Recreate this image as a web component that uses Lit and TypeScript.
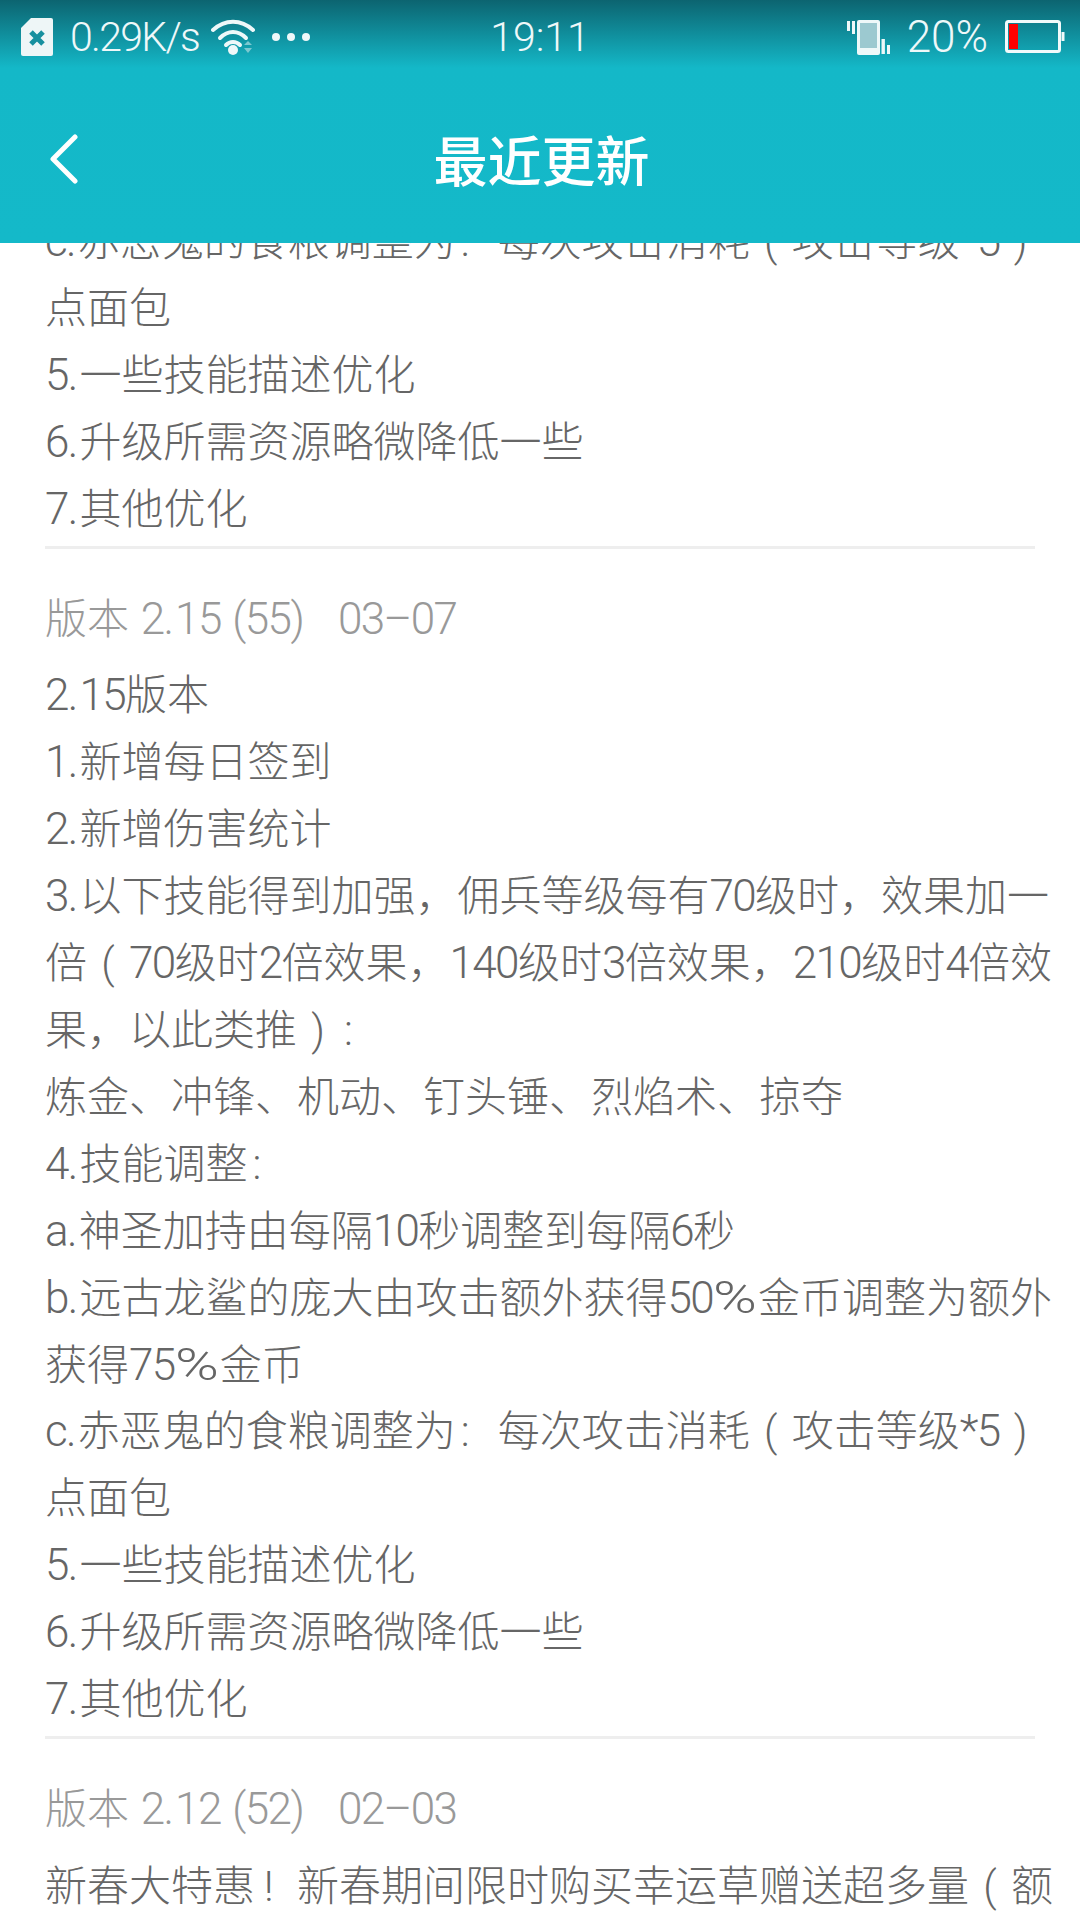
import { LitElement, html, css, svg } from 'lit';
import { customElement } from 'lit/decorators.js';

const releases = [
  {
    head: '',
    lines: [
      'c.赤恶鬼的食粮调整为：每次攻击消耗（攻击等级*5）',
      '点面包',
      '5.一些技能描述优化',
      '6.升级所需资源略微降低一些',
      '7.其他优化',
    ],
  },
  {
    head: '版本 2.15 (55)   03–07',
    lines: [
      '2.15版本',
      '1.新增每日签到',
      '2.新增伤害统计',
      '3.以下技能得到加强，佣兵等级每有70级时，效果加一',
      '倍（70级时2倍效果，140级时3倍效果，210级时4倍效',
      '果，以此类推）：',
      '炼金、冲锋、机动、钉头锤、烈焰术、掠夺',
      '4.技能调整：',
      'a.神圣加持由每隔10秒调整到每隔6秒',
      'b.远古龙鲨的庞大由攻击额外获得50%金币调整为额外',
      '获得75%金币',
      'c.赤恶鬼的食粮调整为：每次攻击消耗（攻击等级*5）',
      '点面包',
      '5.一些技能描述优化',
      '6.升级所需资源略微降低一些',
      '7.其他优化',
    ],
  },
  {
    head: '版本 2.12 (52)   02–03',
    lines: ['新春大特惠！新春期间限时购买幸运草赠送超多量（额'],
  },
];

// the phone's font draws full-width punctuation as small latin marks in a 1em box
const marks: Record<string, [string, string]> = {
  '（': ['(', 'fw'],
  '）': [')', 'fw'],
  '：': [':', 'fw colon'],
  '！': ['!', 'fw bang'],
  '%': ['%', 'pc'],
  '.': ['.', 'lat dot'],
};

function typeset(text: string) {
  const parts = text.match(/[（）：！%.]|[A-Za-z0-9*()– ]+|[^（）：！%.A-Za-z0-9*()– ]+/g) ?? [];
  return parts.map((p) => {
    if (marks[p]) return html`<span class=${marks[p][1]}>${marks[p][0]}</span>`;
    if (/^[A-Za-z0-9*()– ]/.test(p)) return html`<span class="lat">${p}</span>`;
    return p;
  });
}

const simIcon = svg`<svg class="sim" viewBox="0 0 32 38" width="32" height="38">
  <path d="M10 0H30a2 2 0 0 1 2 2V36a2 2 0 0 1-2 2H2a2 2 0 0 1-2-2V10z" fill="#eef6f7"/>
  <path d="M10 14l12 12M22 14L10 26" stroke="#17909f" stroke-width="5" fill="none"/>
</svg>`;

const wifiIcon = svg`<svg class="wifi" viewBox="0 0 44 36" width="44" height="36">
  <path d="M2 11C14 0 30 0 42 11" stroke="#eef8f9" stroke-width="4" fill="none" stroke-linecap="round"/>
  <path d="M9 19C17 11 27 11 35 19" stroke="#eef8f9" stroke-width="4" fill="none" stroke-linecap="round"/>
  <path d="M15 26C19 22 25 22 29 26" stroke="#eef8f9" stroke-width="4" fill="none" stroke-linecap="round"/>
  <circle cx="22" cy="31" r="5" fill="#eef8f9"/>
  <path d="M33 26L37 22L41 26zM33 29L41 29L37 34z" fill="#7cc8d0"/>
</svg>`;

const vibrateIcon = svg`<svg class="vibrate" viewBox="0 0 43 35" width="43" height="35">
  <rect x="0" y="1" width="3" height="10" fill="#eef8f9"/>
  <rect x="5" y="1" width="3" height="13" fill="#eef8f9"/>
  <rect x="10" y="0" width="23" height="35" rx="2" fill="#eef8f9"/>
  <rect x="13" y="3" width="17" height="25" fill="#9cc9d0"/>
  <rect x="34.5" y="19" width="3.4" height="15" fill="#eef8f9"/>
  <rect x="40" y="25" width="3" height="9" fill="#eef8f9"/>
</svg>`;

const batteryIcon = svg`<svg class="battery" viewBox="0 0 60 34" width="60" height="34">
  <rect x="1.5" y="1.5" width="53" height="30" rx="2" fill="none" stroke="#f2fafb" stroke-width="3"/>
  <rect x="4" y="4" width="9" height="25" fill="#ff0000"/>
  <rect x="56.5" y="12" width="3" height="9" fill="#f2fafb"/>
</svg>`;

@customElement('app-root')
export class AppRoot extends LitElement {
  static styles = css`
    :host {
      display: block;
      width: 1080px;
      height: 1920px;
      overflow: hidden;
      background: #fff;
      font-family: Roboto, 'Noto Sans CJK SC', sans-serif;
      font-weight: 300;
    }
    .top {
      height: 243px;
      background: linear-gradient(#0c6470 0, #14b8c8 68px, #14b9c9 100%);
      color: #eef8f9;
      position: relative;
      z-index: 1;
    }
    .status {
      height: 74px;
      box-sizing: border-box;
      padding: 0 15px 0 21px;
      display: flex;
      align-items: center;
      font-size: 41px;
    }
    .speed {
      margin-left: 17px;
      letter-spacing: -1.7px;
    }
    .wifi {
      margin-left: 12px;
    }
    .dots {
      display: flex;
      gap: 7px;
      margin-left: 17px;
    }
    .dots i {
      width: 8px;
      height: 8px;
      border-radius: 50%;
      background: #eef8f9;
    }
    .clock {
      position: absolute;
      left: 0;
      right: 0;
      text-align: center;
    }
    .right {
      margin-left: auto;
      display: flex;
      align-items: center;
    }
    .pct {
      margin: 0 17px;
      font-size: 44px;
    }
    .bar {
      height: 169px;
      display: flex;
      align-items: center;
      justify-content: center;
      position: relative;
    }
    .back {
      position: absolute;
      left: 49px;
      top: 60px;
    }
    .title {
      font-size: 54px;
      font-weight: 500;
      color: #fff;
      padding-left: 3px;
    }
    .list {
      margin-top: -34px;
      padding: 0 24px 0 45px;
      color: #666;
      font-size: 42px;
      line-height: 66.9px;
      white-space: nowrap;
    }
    .release {
      border-bottom: 3px solid #eeeeee;
      margin-right: 21px;
      padding-bottom: 2px;
    }
    .release:last-child {
      border-bottom: none;
    }
    .head {
      color: #999;
      white-space: pre;
      margin: 21px 0 10px;
      padding-top: 17px;
    }
    .line {
      display: block;
    }
    .lat {
      font-size: 44px;
      line-height: 1;
      letter-spacing: -1.6px;
      word-spacing: 4px;
    }
    .head .lat {
      word-spacing: 2.5px;
    }
    .dot {
      letter-spacing: 1.1px;
    }
    .pc {
      display: inline-block;
      width: 45px;
      font-size: 44px;
      line-height: 1;
      transform: scaleX(1.35);
      transform-origin: left;
    }
    .fw {
      display: inline-block;
      width: 42px;
      line-height: 1;
      text-align: center;
    }
    .colon {
      text-align: left;
      padding-left: 5px;
      width: 37px;
    }
    .bang {
      text-align: left;
      padding-left: 9px;
      width: 33px;
    }
  `;

  render() {
    return html`
      <div class="top">
        <div class="status">
          ${simIcon}
          <span class="speed">0.29K/s</span>
          ${wifiIcon}
          <div class="dots"><i></i><i></i><i></i></div>
          <span class="clock">19:11</span>
          <div class="right">
            ${vibrateIcon}
            <span class="pct">20%</span>
            ${batteryIcon}
          </div>
        </div>
        <div class="bar">
          <svg class="back" viewBox="0 0 30 50" width="30" height="50">
            <path d="M26 3L4 25L26 47" stroke="#fff" stroke-width="5" fill="none" stroke-linecap="round" stroke-linejoin="round"/>
          </svg>
          <span class="title">最近更新</span>
        </div>
      </div>
      <div class="list">
        ${releases.map(
          (r) => html`
            <section class="release">
              ${r.head ? html`<div class="head">${typeset(r.head)}</div>` : ''}
              ${r.lines.map((l) => html`<span class="line">${typeset(l)}</span>`)}
            </section>
          `
        )}
      </div>
    `;
  }
}
